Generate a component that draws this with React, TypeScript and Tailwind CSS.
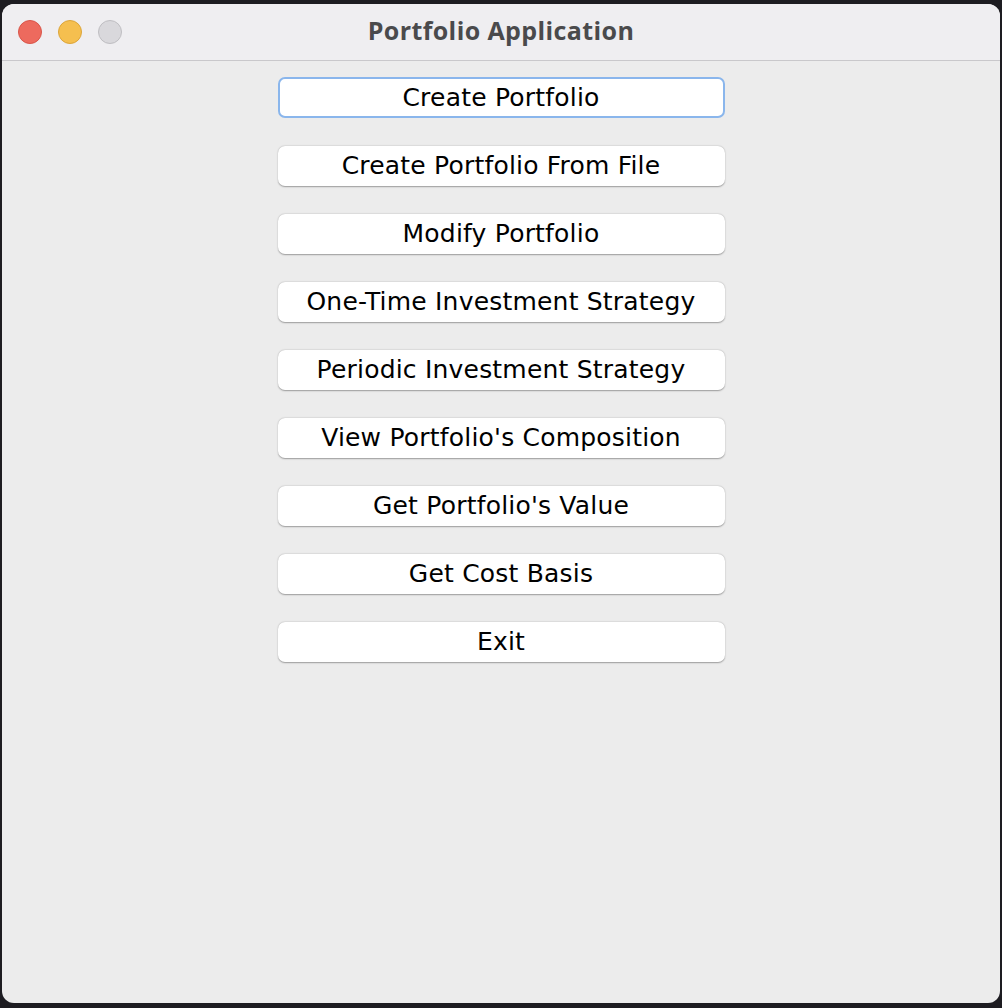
const actions = [
  'Create Portfolio',
  'Create Portfolio From File',
  'Modify Portfolio',
  'One-Time Investment Strategy',
  'Periodic Investment Strategy',
  "View Portfolio's Composition",
  "Get Portfolio's Value",
  'Get Cost Basis',
  'Exit',
];

export default function App() {
  return (
    <div className="w-[1002px] h-[1008px] bg-[#1d1c21] pt-[4px] pl-[2px] pr-[2px] pb-[5px]">
      <div className="w-full h-full rounded-[12px] overflow-hidden bg-[#ececec] flex flex-col">
        {/* title bar */}
        <div className="relative h-[57px] bg-[#efeef1] border-b border-[#c9c8cb] flex items-center justify-center shrink-0">
          <div className="absolute left-[16px] top-[16px] flex gap-[16px]">
            <span className="w-[24px] h-[24px] rounded-full bg-[#ed6a5e] border border-[#d9554a]" />
            <span className="w-[24px] h-[24px] rounded-full bg-[#f5bf4f] border border-[#dca53a]" />
            <span className="w-[24px] h-[24px] rounded-full bg-[#d9d8dc] border border-[#bfbec2]" />
          </div>
          <span className="text-[25px] font-bold tracking-[0.4px] text-[#4a4a4c] font-[family-name:'Open_Sans',sans-serif] -mt-[3px]">
            Portfolio Application
          </span>
        </div>

        {/* menu */}
        <div className="flex flex-col items-center gap-[28px] pt-[16px]">
          {actions.map((label, i) => (
            <button
              key={label}
              className={
                i === 0
                  ? "w-[447px] h-[41px] rounded-[7px] bg-white border-[2px] border-[#8ab6ec] text-[25px] tracking-[0.2px] text-black font-[family-name:'DejaVu_Sans',sans-serif] flex items-center justify-center"
                  : "w-[447px] h-[40px] rounded-[7px] bg-white shadow-[0_0.5px_1.5px_rgba(0,0,0,0.35)] text-[25px] tracking-[0.2px] text-black font-[family-name:'DejaVu_Sans',sans-serif] flex items-center justify-center"
              }
            >
              {label}
            </button>
          ))}
        </div>
      </div>
    </div>
  );
}
